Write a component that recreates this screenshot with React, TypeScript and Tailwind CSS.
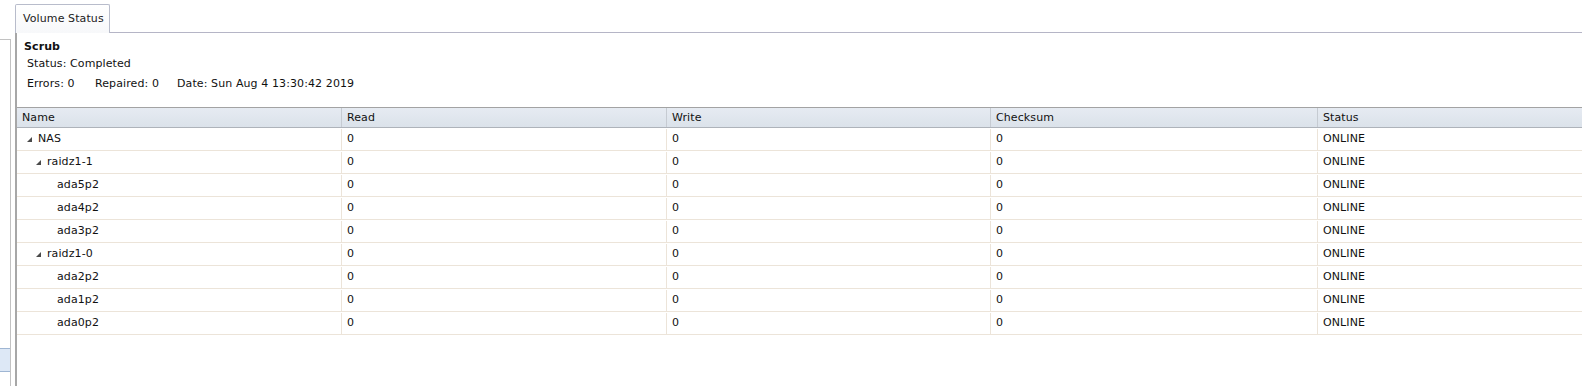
import React from "react";

type Row = { name: string; level: number; expandable: boolean };

const rows: Row[] = [
  { name: "NAS", level: 0, expandable: true },
  { name: "raidz1-1", level: 1, expandable: true },
  { name: "ada5p2", level: 2, expandable: false },
  { name: "ada4p2", level: 2, expandable: false },
  { name: "ada3p2", level: 2, expandable: false },
  { name: "raidz1-0", level: 1, expandable: true },
  { name: "ada2p2", level: 2, expandable: false },
  { name: "ada1p2", level: 2, expandable: false },
  { name: "ada0p2", level: 2, expandable: false },
];

function Arrow() {
  return (
    <svg width="5" height="5" viewBox="0 0 5 5" className="shrink-0">
      <polygon points="5,0 5,5 0,5" fill="#4a4a4a" />
    </svg>
  );
}

function NameCell({ row }: { row: Row }) {
  const pad = row.level === 0 ? "pl-[10px]" : row.level === 1 ? "pl-[19px]" : "pl-[40px]";
  return (
    <div className={`flex items-center gap-[6px] ${pad}`}>
      {row.expandable && <Arrow />}
      <span>{row.name}</span>
    </div>
  );
}

export default function App() {
  const font = { fontFamily: '"DejaVu Sans", Verdana, sans-serif' };
  return (
    <div
      className="flex h-[386px] w-[1582px] overflow-hidden bg-white text-[11px] tracking-[0.1px] text-[#111]"
      style={font}
    >
      {/* left panel sliver */}
      <div className="flex w-[11px] shrink-0 flex-col pt-[39px]">
        <div className="flex flex-1 flex-col border-t border-r border-[#c2c2c2]">
          <div className="mt-[308px] h-[24px] border-y border-[#9fb6d3] bg-[#dde8f6]" />
        </div>
      </div>
      <div className="w-[4px] shrink-0" />
      {/* main panel */}
      <div className="flex min-w-0 flex-1 flex-col">
        <div className="flex h-[33px] shrink-0 items-end pt-[4px]">
          <div className="flex h-[29px] w-[95px] shrink-0 items-center rounded-t-[2px] border border-b-0 border-[#b8bccb] bg-gradient-to-b from-white to-[#f7f8fa] pl-[7px] text-[#222]">
            Volume Status
          </div>
          <div className="h-[1px] flex-1 bg-[#b5b5c6]" />
        </div>
        <div className="flex min-h-0 flex-1 flex-col border-l-2 border-[#a7a7a7]">
          <div className="pl-[7px] pt-[7px]">
            <div className="font-bold leading-[13px]">Scrub</div>
            <div className="pl-[3px] pt-[4px] leading-[13px]">Status: Completed</div>
            <div className="flex pl-[3px] pt-[7px] leading-[13px]">
              <span className="w-[68px]">Errors: 0</span>
              <span className="w-[82px]">Repaired: 0</span>
              <span>Date: Sun Aug 4 13:30:42 2019</span>
            </div>
          </div>
          <div className="mt-[17px] overflow-hidden">
            <div className="flex h-[21px] w-[1700px] border-y border-t-[#a3a3a3] border-b-[#aeb3ba] bg-gradient-to-b from-[#e6ebf2] to-[#dbe2ea]">
              {["Name", "Read", "Write", "Checksum", "Status"].map((h, i) => (
                <div
                  key={h}
                  className={`flex items-center pl-[5px] pt-[1px] ${i === 0 ? "w-[325px]" : i === 1 ? "w-[325px]" : i === 2 ? "w-[324px]" : i === 3 ? "w-[327px]" : "w-[380px]"} ${i < 4 ? "border-r border-[#c6cbd2]" : ""}`}
                >
                  {h}
                </div>
              ))}
            </div>
            {rows.map((r) => (
              <div key={r.name} className="flex h-[23px] w-[1700px] border-b border-[#ece4d9] pt-[1px]">
                <div className="flex w-[325px] items-center border-r border-[#ece4d9]">
                  <NameCell row={r} />
                </div>
                <div className="flex w-[325px] items-center border-r border-[#ece4d9] pl-[5px]">0</div>
                <div className="flex w-[324px] items-center border-r border-[#ece4d9] pl-[5px]">0</div>
                <div className="flex w-[327px] items-center border-r border-[#ece4d9] pl-[5px]">0</div>
                <div className="flex w-[380px] items-center pl-[5px]">ONLINE</div>
              </div>
            ))}
          </div>
        </div>
      </div>
    </div>
  );
}
